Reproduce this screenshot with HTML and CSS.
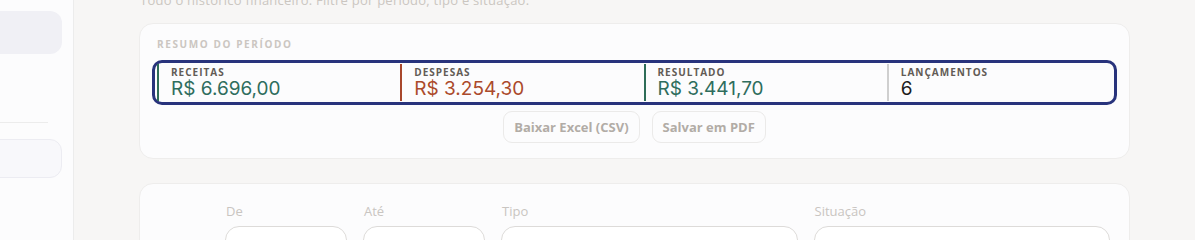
FILE: index.html
```html
<!DOCTYPE html>
<html lang="pt-BR">
<head>
  <meta charset="UTF-8">
  <title>Histórico financeiro</title>
  <link rel="stylesheet" href="styles.css">
</head>
<body>

<aside class="sidebar">
  <div class="nav-item active"></div>
  <div class="nav-divider"></div>
  <div class="nav-item soft"></div>
</aside>

<main class="main">
  <p class="subtitle">Todo o histórico financeiro. Filtre por período, tipo e situação.</p>

  <section class="card summary-card">
    <div class="section-title">RESUMO DO PERÍODO</div>
    <div class="summary">
      <div class="stat income">
        <span class="stat-label">RECEITAS</span>
        <span class="stat-value">R$ 6.696,00</span>
      </div>
      <div class="stat expense">
        <span class="stat-label">DESPESAS</span>
        <span class="stat-value">R$ 3.254,30</span>
      </div>
      <div class="stat income">
        <span class="stat-label">RESULTADO</span>
        <span class="stat-value">R$ 3.441,70</span>
      </div>
      <div class="stat count">
        <span class="stat-label">LANÇAMENTOS</span>
        <span class="stat-value">6</span>
      </div>
    </div>
    <div class="actions">
      <button class="btn">Baixar Excel (CSV)</button>
      <button class="btn">Salvar em PDF</button>
    </div>
  </section>

  <section class="card filters">
    <label class="field">
      <span class="field-label">De</span>
      <span class="input"></span>
    </label>
    <label class="field">
      <span class="field-label">Até</span>
      <span class="input"></span>
    </label>
    <label class="field">
      <span class="field-label">Tipo</span>
      <span class="input"></span>
    </label>
    <label class="field">
      <span class="field-label">Situação</span>
      <span class="input"></span>
    </label>
  </section>
</main>

</body>
</html>
```

FILE: styles.css
```css
body {
  margin: 0;
  height: 240px;
  overflow: hidden;
  display: flex;
  background: #f7f6f5;
  font-family: 'Open Sans', 'Lato', sans-serif;
}

.sidebar {
  width: 74px;
  flex-shrink: 0;
  background: #fcfcfd;
  border-right: 1px solid #ececec;
  padding-top: 11px;
  box-sizing: border-box;
}

.nav-item {
  margin-left: -14px;
  width: 76px;
  border-radius: 12px;
  box-sizing: border-box;
}

.nav-item.active {
  height: 43px;
  background: #f0f0f5;
}

.nav-divider {
  width: 48px;
  height: 1px;
  background: #ececec;
  margin: 68px 0 16px;
}

.nav-item.soft {
  height: 39px;
  background: #f8f8fb;
  border: 1px solid #ececf2;
}

.main {
  flex: 1;
  padding: 0 65px;
}

.subtitle {
  margin: -9px 0 14px 1px;
  font-size: 13px;
  letter-spacing: 0.25px;
  line-height: 18px;
  color: #cbc6c1;
}

.card {
  background: #fcfcfd;
  border: 1px solid #eeedec;
  border-radius: 14px;
}

.summary-card {
  padding: 14px 12px 15px;
}

.section-title {
  padding-left: 5px;
  font-size: 10px;
  font-weight: 700;
  letter-spacing: 1.6px;
  color: #cbc6c1;
  line-height: 12px;
  margin-bottom: 10px;
}

.summary {
  display: grid;
  grid-template-columns: repeat(4, 1fr);
  gap: 18px;
  border: 3px solid #28337c;
  border-radius: 10px;
  padding: 1px 2px;
}

.stat {
  display: flex;
  flex-direction: column;
  border-left: 2px solid #cfcfcf;
  padding: 2px 0 1px 12px;
}

.stat.income { border-color: #2f6d58; }
.stat.expense { border-color: #a8472c; }

.stat-label {
  font-size: 10px;
  font-weight: 700;
  letter-spacing: 1px;
  color: #625b55;
  line-height: 12px;
}

.stat-value {
  font-family: 'Inter', sans-serif;
  font-size: 19px;
  line-height: 22px;
  color: #1c1c1c;
}

.income .stat-value { color: #2f6d5d; }
.expense .stat-value { color: #ab4a2b; }

.actions {
  display: flex;
  justify-content: center;
  gap: 12px;
  margin-top: 6px;
}

.btn {
  height: 32px;
  padding: 0 10px;
  font-family: inherit;
  font-size: 13px;
  font-weight: 700;
  color: #b2aca6;
  background: #fcfcfd;
  border: 1px solid #ebeae9;
  border-radius: 9px;
}

.filters {
  margin-top: 24px;
  display: flex;
  gap: 16px;
  padding: 18px 19px 0 85px;
  height: 60px;
}

.field {
  display: flex;
  flex-direction: column;
  gap: 6px;
  width: 122px;
}

.field:nth-child(3),
.field:nth-child(4) {
  flex: 1;
}

.field-label {
  font-size: 13px;
  line-height: 18px;
  color: #c9c5c1;
  padding-left: 1px;
}

.input {
  height: 40px;
  border: 1px solid #dddbd9;
  border-radius: 14px;
  background: #fff;
}
```
